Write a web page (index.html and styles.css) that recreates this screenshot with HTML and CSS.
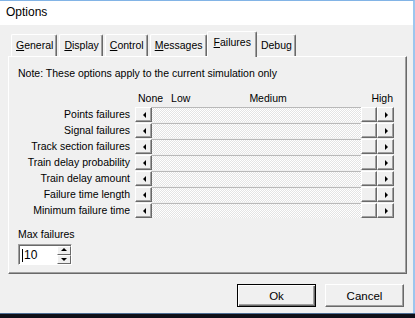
FILE: index.html
```html
<!DOCTYPE html>
<html lang="en">
<head>
  <meta charset="UTF-8" />
  <title>Options</title>
  <link rel="stylesheet" href="styles.css">
</head>
<body>

  <div class="window">
    <div class="titlebar">Options</div>

    <div class="client">
      <div class="tabs">
        <div class="tab"><u>G</u>eneral</div>
        <div class="tab"><u>D</u>isplay</div>
        <div class="tab"><u>C</u>ontrol</div>
        <div class="tab"><u>M</u>essages</div>
        <div class="tab is-active"><u>F</u>ailures</div>
        <div class="tab">Debug</div>
      </div>

      <div class="panel">
        <p class="note">Note: These options apply to the current simulation only</p>

        <div class="levels">
          <span></span>
          <div class="scale">
            <span class="none">None</span>
            <span class="low">Low</span>
            <span class="medium">Medium</span>
            <span class="high">High</span>
          </div>

          <label>Points failures</label>
          <div class="scroll"><i class="btn left"></i><b class="track"></b><i class="thumb"></i><i class="btn right"></i></div>

          <label>Signal failures</label>
          <div class="scroll"><i class="btn left"></i><b class="track"></b><i class="thumb"></i><i class="btn right"></i></div>

          <label>Track section failures</label>
          <div class="scroll"><i class="btn left"></i><b class="track"></b><i class="thumb"></i><i class="btn right"></i></div>

          <label>Train delay probability</label>
          <div class="scroll"><i class="btn left"></i><b class="track"></b><i class="thumb"></i><i class="btn right"></i></div>

          <label>Train delay amount</label>
          <div class="scroll"><i class="btn left"></i><b class="track"></b><i class="thumb"></i><i class="btn right"></i></div>

          <label>Failure time length</label>
          <div class="scroll"><i class="btn left"></i><b class="track"></b><i class="thumb"></i><i class="btn right"></i></div>

          <label>Minimum failure time</label>
          <div class="scroll"><i class="btn left"></i><b class="track"></b><i class="thumb"></i><i class="btn right"></i></div>
        </div>

        <div class="max">
          <label>Max failures</label>
          <div class="spin">
            <div class="edit"><span class="caret"></span>10</div>
            <div class="arrows">
              <i class="up"></i>
              <i class="down"></i>
            </div>
          </div>
        </div>
      </div>

      <div class="buttons">
        <button type="button" class="is-default">Ok</button>
        <button type="button">Cancel</button>
      </div>
    </div>
  </div>

  <div class="taskbar"></div>

</body>
</html>
```

FILE: styles.css
```css
* {
  box-sizing: border-box;
}

html, body {
  margin: 0;
  width: 415px;
  height: 318px;
  overflow: hidden;
  background: #000;
}

body {
  font-family: "Liberation Sans", Arial, sans-serif;
  font-size: 10.5px;
  color: #000;
}

.window {
  width: 415px;
  height: 313px;
  background: #f0f0f0;
  border-top: 1px solid #82b4e6;
  border-right: 2px solid #9cc6ee;
  display: flex;
  flex-direction: column;
}

.titlebar {
  height: 24px;
  flex: none;
  background: #fff;
  padding-left: 6px;
  line-height: 22px;
  font-size: 12px;
}

.client {
  padding: 6px 0 0 8px;
}

/* tabs */
.tabs {
  display: flex;
  align-items: flex-end;
  height: 25px;
  padding-left: 3px;
}

.tab {
  position: relative;
  height: 22px;
  padding: 4px 3px 0 4px;
  margin-right: 2px;
  border: 1px solid;
  border-color: #fff #696969 transparent #fff;
  border-bottom: 0;
  box-shadow: inset -1px 0 #a0a0a0;
  border-radius: 2px 2px 0 0;
  white-space: nowrap;

  &.is-active {
    z-index: 1;
    height: 26px;
    margin: 0 0 -1px -2px;
    padding: 4px 5px 0 6px;
    background: #f0f0f0;
  }

  &.is-active + & {
    margin-left: -1px;
  }
}

.panel {
  width: 399px;
  height: 218px;
  padding: 10px 12px 0 9px;
  border: 1px solid;
  border-color: #fff #696969 #696969 #fff;
  box-shadow: inset -1px -1px #a0a0a0;
}

.note {
  margin: 0;
  line-height: 13px;
}

/* sliders */
.levels {
  display: grid;
  grid-template-columns: 112px 259px;
  column-gap: 5px;
  row-gap: 1px;
  margin-top: 12px;

  label {
    text-align: right;
    line-height: 15px;
    white-space: nowrap;
  }
}

.scale {
  display: flex;
  height: 13px;
  line-height: 13px;
  margin-bottom: 1px;

  .none { margin-left: 3px; }
  .low { margin-left: 8px; }
  .medium { margin-left: 59px; }
  .high { margin-left: auto; margin-right: 1px; }
}

.scroll {
  display: flex;
  height: 15px;
}

.track {
  flex: 1;
  background-color: #fff;
  background-image: conic-gradient(#fff 25%, #e4e4e4 0 50%, #fff 0 75%, #e4e4e4 0);
  background-size: 2px 2px;
  box-shadow: inset 0 1px #b9b9b9;
}

.btn, .thumb {
  position: relative;
  width: 17px;
  flex: none;
  background: #f0f0f0;
  border: 1px solid;
  border-color: #fff #696969 #696969 #fff;
  box-shadow: inset -1px -1px #a0a0a0;
}

.thumb {
  width: 16px;
}

.btn::before {
  content: "";
  position: absolute;
  top: 4px;
  left: 6px;
  border: 3px solid transparent;
}

.btn.left::before {
  left: 4px;
  border-right-color: #000;
}

.btn.right::before {
  left: 7px;
  border-left-color: #000;
}

/* spin box */
.max {
  margin-top: 10px;

  label {
    display: block;
    line-height: 13px;
    margin-bottom: 3px;
  }
}

.spin {
  display: flex;
  width: 54px;
  height: 21px;
  border: 1px solid;
  border-color: #a0a0a0 #fff #fff #a0a0a0;
  background: #fff;
}

.edit {
  flex: 1;
  display: flex;
  align-items: center;
  padding-left: 2px;
  border-top: 1px solid #696969;
  border-left: 1px solid #696969;
  font-size: 12px;
}

.caret {
  width: 1px;
  height: 13px;
  background: #000;
  margin-right: 1px;
}

.arrows {
  display: flex;
  flex-direction: column;
  width: 14px;
  border-top: 1px solid #696969;

  i {
    position: relative;
    flex: 1;
    background: #f0f0f0;
    border: 1px solid;
    border-color: #fff #696969 #696969 #fff;
  }

  i::before {
    content: "";
    position: absolute;
    left: 3px;
    border: 3px solid transparent;
  }

  .up::before {
    top: -2px;
    border-bottom-color: #000;
  }

  .down::before {
    top: 2px;
    border-top-color: #000;
  }
}

/* dialog buttons */
.buttons {
  display: flex;
  justify-content: flex-end;
  gap: 9px;
  width: 399px;
  padding-right: 3px;
  margin-top: 10px;

  button {
    width: 79px;
    height: 23px;
    padding: 0;
    font: 11.5px "Liberation Sans", Arial, sans-serif;
    background: #f0f0f0;
    border: 1px solid;
    border-color: #fff #696969 #696969 #fff;
    box-shadow: inset -1px -1px #a0a0a0;
  }

  .is-default {
    border: 1px solid #000;
    box-shadow: inset 1px 1px #fff, inset -1px -1px #696969, inset -2px -2px #a0a0a0;
  }
}

.taskbar {
  height: 5px;
  border-top: 1px solid #4e6f95;
  background: #0e0f17;
}
```
